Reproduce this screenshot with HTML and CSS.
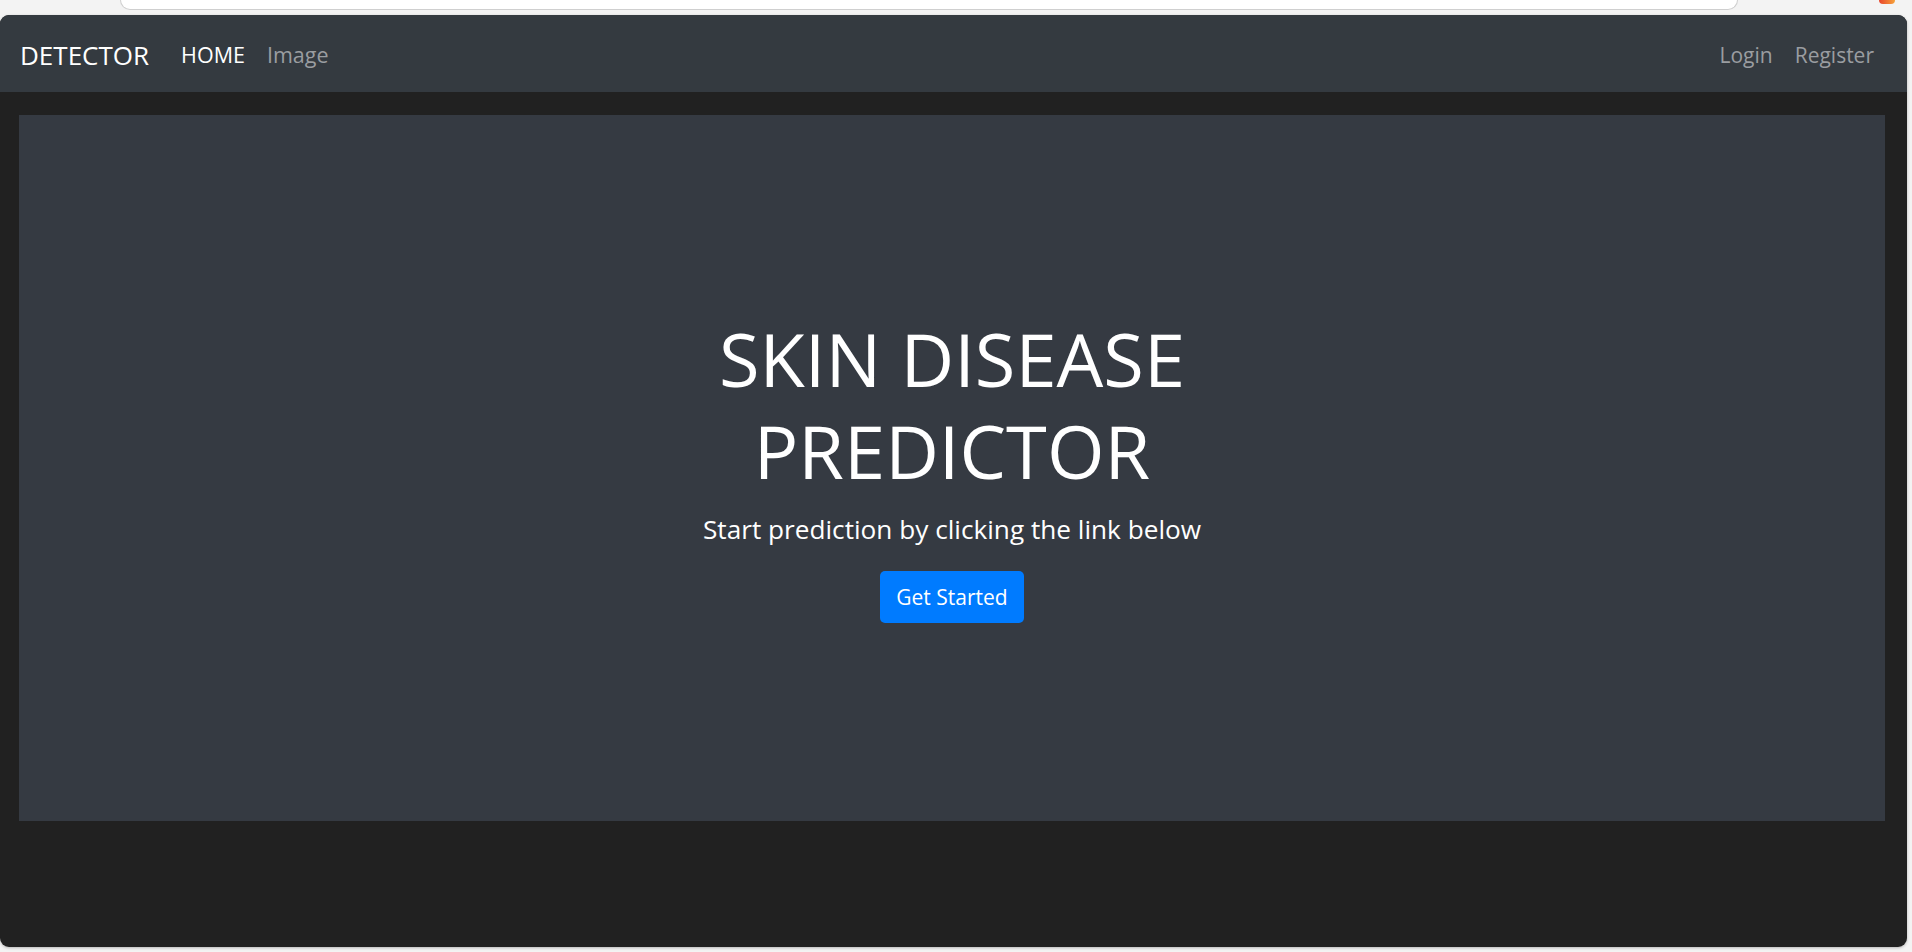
FILE: index.html
```html
<!DOCTYPE html>
<html lang="en">
<head>
<meta charset="utf-8">
<title>Skin Disease Predictor</title>
<link rel="stylesheet" href="styles.css">
</head>
<body>
<div class="chrome">
  <div class="address"></div>
  <span class="ext"></span>
</div>
<div class="window">
  <nav class="navbar">
    <a class="brand" href="#">DETECTOR</a>
    <div class="nav-left">
      <a class="nav-link active" href="#">HOME</a>
      <a class="nav-link" href="#">Image</a>
    </div>
    <div class="nav-right">
      <a class="nav-link" href="#">Login</a>
      <a class="nav-link" href="#">Register</a>
    </div>
  </nav>
  <main class="main">
    <section class="jumbotron">
      <h1 class="display">SKIN DISEASE<br>PREDICTOR</h1>
      <p class="lead">Start prediction by clicking the link below</p>
      <a class="btn" href="#">Get Started</a>
    </section>
  </main>
</div>
</body>
</html>
```

FILE: styles.css
```css
* { box-sizing: border-box; }
html, body { margin: 0; padding: 0; }
body {
  background: #f3f3f3;
  font-family: "Segoe UI", "Open Sans", "Noto Sans", sans-serif;
  width: 1912px;
  height: 952px;
  overflow: hidden;
}
a { text-decoration: none; }

.chrome {
  height: 15px;
  display: flex;
  align-items: flex-start;
}
.address {
  margin-left: 120px;
  width: 1618px;
  height: 10px;
  background: #ffffff;
  border: 1px solid #cfcfcf;
  border-top: none;
  border-radius: 0 0 16px 16px;
}
.ext {
  margin-left: 141px;
  width: 16px;
  height: 4px;
  border-radius: 0 0 6px 6px;
  background: linear-gradient(90deg, #e8452c, #f6a23a);
}

.window {
  width: 1907px;
  height: 932px;
  background: #212121;
  border-radius: 9px;
  overflow: hidden;
  box-shadow: 0 1px 3px rgba(0,0,0,0.25);
  display: flex;
  flex-direction: column;
}

.navbar {
  height: 77px;
  background: #343a40;
  display: flex;
  align-items: center;
  padding: 2px 22px 0 20px;
}
.brand {
  color: #ffffff;
  font-size: 26px;
  margin-right: 21px;
}
.nav-left, .nav-right {
  display: flex;
  align-items: center;
}
.nav-right { margin-left: auto; }
.nav-link {
  color: #9a9da1;
  font-size: 21.5px;
  padding: 0 11px;
}
.nav-right .nav-link { font-size: 21px; }
.nav-link.active { color: #ffffff; }

.main {
  flex: 1;
  padding: 23px 22px 0 19px;
}
.jumbotron {
  height: 706px;
  background: #353a42;
  display: flex;
  flex-direction: column;
  align-items: center;
  justify-content: center;
  text-align: center;
  color: #ffffff;
  padding-bottom: 1px;
}
.display {
  margin: 0;
  font-weight: 400;
  font-size: 74px;
  line-height: 92px;
}
.lead {
  margin: 13px 0 0;
  font-size: 26.2px;
  line-height: 39px;
}
.btn {
  margin-top: 22px;
  height: 52px;
  padding: 0 16px;
  display: inline-flex;
  align-items: center;
  background: #007bff;
  color: #ffffff;
  font-size: 21px;
  border-radius: 5px;
}
```
